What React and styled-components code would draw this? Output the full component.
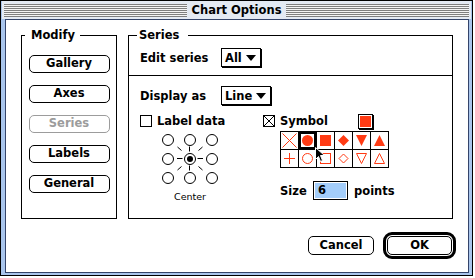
import styled, { createGlobalStyle } from "styled-components";

const RED = "#ff3b14";

const GlobalStyle = createGlobalStyle`
  html, body { margin: 0; padding: 0; background: #fff; }
  body {
    font-family: "DejaVu Sans", "Liberation Sans", sans-serif;
    font-size: 11.5px;
    font-weight: bold;
    color: #000;
  }
  #root { width: 475px; height: 278px; overflow: hidden; }
`;

const Window = styled.div`
  box-sizing: border-box;
  width: 473px;
  height: 276px;
  border: 1px solid #000;
  background: #a9c5ec;
  padding: 0 3px 2px 4px;
  display: flex;
  flex-direction: column;
`;

const TitleBar = styled.div`
  height: 18px;
  margin: 0 -2px 0 -3px;
  padding: 0 2px 0 2px;
  display: flex;
  align-items: center;
  gap: 4px;
  background: #e4eaf3;
`;

const Stripes = styled.div`
  flex: 1;
  height: 13px;
  background: repeating-linear-gradient(to bottom, #7f7f7f 0 1px, #f4f4f4 1px 2px);
`;

const Title = styled.span`
  line-height: 18px;
  padding: 0 1px;
`;

const Panel = styled.div`
  flex: 1;
  background: #fff;
  border: 1px solid #34446a;
  display: flex;
  flex-direction: column;
  padding: 8px 15px 0 15px;
`;

const GroupRow = styled.div`
  display: flex;
  gap: 11px;
`;

const Group = styled.fieldset`
  box-sizing: border-box;
  margin: 0;
  padding: 0;
  min-width: 0;
  width: ${(p) => p.$w}px;
  height: 191px;
  border: 1px solid #000;
  display: flex;
  flex-direction: column;
`;

const Legend = styled.legend`
  margin-left: ${(p) => p.$indent}px;
  padding: ${(p) => p.$pad};
  line-height: 14px;
`;

const ButtonStack = styled.div`
  display: flex;
  flex-direction: column;
  align-items: center;
  gap: 12px;
  padding-top: 13px;
`;

const Button = styled.button`
  box-sizing: border-box;
  width: ${(p) => p.$w}px;
  height: ${(p) => p.$h}px;
  padding: 0;
  border: 1px solid ${(p) => (p.disabled ? "#9c9c9c" : "#000")};
  border-radius: 5px;
  background: #fff;
  color: ${(p) => (p.disabled ? "#9c9c9c" : "#000")};
  font: bold 11.5px "DejaVu Sans", sans-serif;
  line-height: 1;
`;

const DefaultRing = styled.div`
  display: flex;
  padding: 1px;
  border: 3px solid #000;
  border-radius: 9px;
`;

const TopSection = styled.div`
  display: flex;
  align-items: center;
  padding: 6px 0 8px 11px;
  border-bottom: 1px solid #000;
`;

const BottomSection = styled.div`
  display: flex;
  flex-direction: column;
  padding: 10px 0 0 11px;
`;

const FieldRow = styled.div`
  display: flex;
  align-items: center;
`;

const FieldLabel = styled.span`
  width: 81px;
`;

const Popup = styled.div`
  box-sizing: border-box;
  height: 19px;
  display: flex;
  align-items: center;
  gap: 4px;
  padding: 0 4px 0 3px;
  border: 1px solid #000;
  box-shadow: 1px 1px 0 #000;
`;

const Arrow = styled.span`
  width: 0;
  height: 0;
  border-left: 5.5px solid transparent;
  border-right: 5.5px solid transparent;
  border-top: 6px solid #000;
`;

const Columns = styled.div`
  display: flex;
  margin-top: 8px;
`;

const LeftCol = styled.div`
  width: 123px;
  display: flex;
  flex-direction: column;
`;

const RightCol = styled.div`
  display: flex;
  flex-direction: column;
`;

const CheckRow = styled.div`
  height: 16px;
  display: flex;
  align-items: center;
  gap: 5px;
`;

const Box = styled.span`
  box-sizing: border-box;
  width: 12px;
  height: 12px;
  border: 1px solid #000;
  display: block;
  svg { display: block; }
`;

const SymbolLabel = styled.span`
  width: 73px;
`;

const Swatch = styled.span`
  box-sizing: border-box;
  width: 15px;
  height: 15px;
  border: 1px solid #000;
  padding: 1px;
  background: #fff;
  box-shadow: 1px 1px 0 #000;
  &::after {
    content: "";
    display: block;
    width: 100%;
    height: 100%;
    background: ${RED};
  }
`;

const RadioGrid = styled.div`
  position: relative;
  display: grid;
  grid-template-columns: repeat(3, 22px);
  grid-auto-rows: 19px;
  place-items: center;
  width: 66px;
  margin: 1px 0 0 17px;
`;

const Radio = styled.span`
  box-sizing: border-box;
  width: 12px;
  height: 12px;
  border: 1px solid #000;
  border-radius: 50%;
  background: #fff;
  display: grid;
  place-items: center;
  &::after {
    content: "";
    width: 6px;
    height: 6px;
    border-radius: 50%;
    background: ${(p) => (p.$on ? "#000" : "transparent")};
  }
`;

const Ticks = styled.svg`
  position: absolute;
  left: 0;
  top: 0;
  pointer-events: none;
`;

const Caption = styled.div`
  width: 66px;
  margin: 4px 0 0 17px;
  text-align: center;
  font: normal 9.5px "DejaVu Sans", sans-serif;
  line-height: 11px;
`;

const SymbolGrid = styled.div`
  position: relative;
  display: grid;
  grid-template-columns: repeat(6, 17px);
  grid-auto-rows: 17px;
  gap: 1px;
  padding: 1px;
  background: #000;
  width: max-content;
  margin: 2px 0 0 17px;
`;

const Cell = styled.div`
  background: #fff;
  display: grid;
  place-items: center;
  box-shadow: ${(p) => (p.$selected ? "inset 0 0 0 2px #000" : "none")};
  svg { display: block; }
`;

const Cursor = styled.svg`
  position: absolute;
  left: 35px;
  top: 16px;
`;

const SizeRow = styled.div`
  display: flex;
  align-items: center;
  margin: 13px 0 0 17px;
`;

const SizeLabel = styled.span`
  width: 33px;
`;

const Field = styled.div`
  box-sizing: border-box;
  width: 35px;
  height: 19px;
  padding: 1px;
  border: 1px solid #000;
`;

const Selection = styled.div`
  height: 100%;
  background: #a3cdfa;
  padding-left: 3px;
  line-height: 15px;
`;

const Unit = styled.span`
  margin-left: 6px;
`;

const Footer = styled.div`
  display: flex;
  justify-content: flex-end;
  align-items: center;
  gap: 9px;
  margin: 13px -3px 0 0;
`;

const symbols = [
  [
    <g key="x" stroke={RED}><line x1="1.5" y1="1.5" x2="15.5" y2="15.5" /><line x1="15.5" y1="1.5" x2="1.5" y2="15.5" /></g>,
    <circle key="c" cx="8.5" cy="8.5" r="5.5" fill={RED} />,
    <rect key="s" x="3" y="3" width="11" height="11" fill={RED} />,
    <polygon key="d" points="8.5,3 14,8.5 8.5,14 3,8.5" fill={RED} />,
    <polygon key="v" points="3,3 14,3 8.5,14" fill={RED} />,
    <polygon key="a" points="8.5,3 14,14 3,14" fill={RED} />,
  ],
  [
    <g key="p" stroke={RED}><line x1="8.5" y1="3" x2="8.5" y2="14" /><line x1="3" y1="8.5" x2="14" y2="8.5" /></g>,
    <circle key="c" cx="8.5" cy="8.5" r="5" fill="none" stroke={RED} />,
    <rect key="s" x="3.5" y="3.5" width="10" height="10" fill="none" stroke={RED} />,
    <polygon key="d" points="8.5,4 13,8.5 8.5,13 4,8.5" fill="none" stroke={RED} />,
    <polygon key="v" points="3.5,3.5 13.5,3.5 8.5,13.5" fill="none" stroke={RED} />,
    <polygon key="a" points="8.5,3.5 13.5,13.5 3.5,13.5" fill="none" stroke={RED} />,
  ],
];

const Symbol = ({ children }) => (
  <svg width="17" height="17" viewBox="0 0 17 17" strokeWidth="1">
    {children}
  </svg>
);

export default function App() {
  return (
    <>
      <GlobalStyle />
      <Window>
        <TitleBar>
          <Stripes />
          <Title>Chart Options</Title>
          <Stripes />
        </TitleBar>
        <Panel>
          <GroupRow>
            <Group $w={96}>
              <Legend $indent={3} $pad="0 5px 0 6px">Modify</Legend>
              <ButtonStack>
                <Button $w={81} $h={18}>Gallery</Button>
                <Button $w={81} $h={18}>Axes</Button>
                <Button $w={81} $h={18} disabled>Series</Button>
                <Button $w={81} $h={18}>Labels</Button>
                <Button $w={81} $h={18}>General</Button>
              </ButtonStack>
            </Group>
            <Group $w={325}>
              <Legend $indent={8} $pad="0 9px 0 2px">Series</Legend>
              <TopSection>
                <FieldLabel>Edit series</FieldLabel>
                <Popup>All<Arrow /></Popup>
              </TopSection>
              <BottomSection>
                <FieldRow>
                  <FieldLabel>Display as</FieldLabel>
                  <Popup>Line<Arrow /></Popup>
                </FieldRow>
                <Columns>
                  <LeftCol>
                    <CheckRow>
                      <Box />
                      <span>Label data</span>
                    </CheckRow>
                    <RadioGrid>
                      {Array.from({ length: 9 }, (_, i) => (
                        <Radio key={i} $on={i === 4} />
                      ))}
                      <Ticks width="66" height="57" viewBox="0 0 66 57" stroke="#000" strokeWidth="1">
                        <line x1="20" y1="28.5" x2="25.5" y2="28.5" />
                        <line x1="40.5" y1="28.5" x2="46" y2="28.5" />
                        <line x1="32.5" y1="16.5" x2="32.5" y2="21.5" />
                        <line x1="32.5" y1="35.5" x2="32.5" y2="40.5" />
                        <line x1="20.5" y1="17" x2="24.5" y2="20.5" />
                        <line x1="41.5" y1="20.5" x2="45.5" y2="17" />
                        <line x1="20.5" y1="40" x2="24.5" y2="36.5" />
                        <line x1="41.5" y1="36.5" x2="45.5" y2="40" />
                      </Ticks>
                    </RadioGrid>
                    <Caption>Center</Caption>
                  </LeftCol>
                  <RightCol>
                    <CheckRow>
                      <Box>
                        <svg width="10" height="10" viewBox="0 0 10 10" stroke="#000" strokeWidth="1">
                          <line x1="0" y1="0" x2="10" y2="10" />
                          <line x1="10" y1="0" x2="0" y2="10" />
                        </svg>
                      </Box>
                      <SymbolLabel>Symbol</SymbolLabel>
                      <Swatch />
                    </CheckRow>
                    <SymbolGrid>
                      {symbols.map((row, r) =>
                        row.map((shape, c) => (
                          <Cell key={`${r}-${c}`} $selected={r === 0 && c === 1}>
                            <Symbol>{shape}</Symbol>
                          </Cell>
                        ))
                      )}
                      <Cursor width="10" height="16" viewBox="0 0 10 16">
                        <path
                          d="M0.5 0.5 L0.5 12.5 L3.5 9.5 L5.5 14.5 L7.5 13.5 L5.5 8.5 L9.5 8.5 Z"
                          fill="#000"
                          stroke="#fff"
                          strokeWidth="1"
                        />
                      </Cursor>
                    </SymbolGrid>
                    <SizeRow>
                      <SizeLabel>Size</SizeLabel>
                      <Field>
                        <Selection>6</Selection>
                      </Field>
                      <Unit>points</Unit>
                    </SizeRow>
                  </RightCol>
                </Columns>
              </BottomSection>
            </Group>
          </GroupRow>
          <Footer>
            <Button $w={66} $h={19}>Cancel</Button>
            <DefaultRing>
              <Button $w={65} $h={19}>OK</Button>
            </DefaultRing>
          </Footer>
        </Panel>
      </Window>
    </>
  );
}
